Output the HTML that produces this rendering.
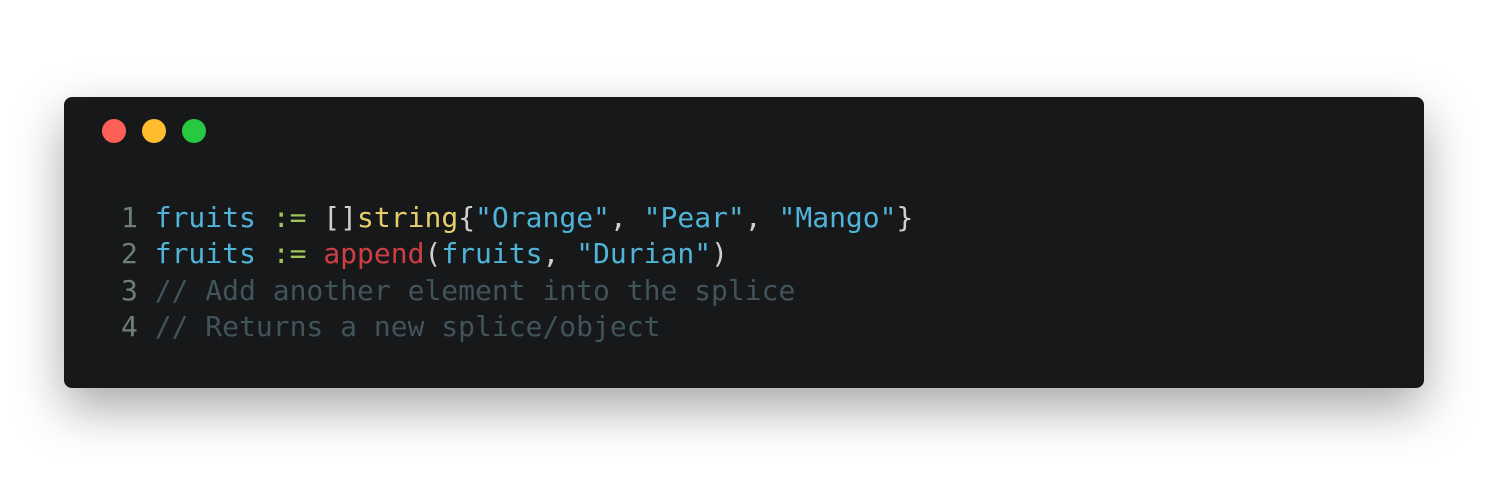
<!DOCTYPE html>
<html><head><style>
html,body{margin:0;padding:0;background:#fff;width:1488px;height:486px;overflow:hidden}
.win{position:absolute;left:64px;top:97px;width:1360px;height:291px;background:#17181a;border-radius:8px;box-shadow:0 20px 50px rgba(0,0,0,0.35)}
.d{position:absolute;top:22px;width:24px;height:24px;border-radius:50%}
pre{position:absolute;left:57px;top:103px;margin:0;font-family:"DejaVu Sans Mono","Liberation Mono",monospace;font-size:28px;line-height:36.4px;color:#d0d0d0}
.n{color:#6e7f7b}.b{color:#4fb4d8}.g{color:#9ec45a}.y{color:#e6cd69}.r{color:#cd3f45}.c{color:#41535b}
</style></head><body>
<div class="win">
<div class="d" style="left:38px;background:#fe5f57"></div>
<div class="d" style="left:78px;background:#febc2e"></div>
<div class="d" style="left:118px;background:#28c840"></div>
<pre><span class="n">1</span> <span class="b">fruits</span> <span class="g">:=</span> []<span class="y">string</span>{<span class="b">"Orange"</span>, <span class="b">"Pear"</span>, <span class="b">"Mango"</span>}
<span class="n">2</span> <span class="b">fruits</span> <span class="g">:=</span> <span class="r">append</span>(<span class="b">fruits</span>, <span class="b">"Durian"</span>)
<span class="n">3</span> <span class="c">// Add another element into the splice</span>
<span class="n">4</span> <span class="c">// Returns a new splice/object</span></pre>
</div>
</body></html>
